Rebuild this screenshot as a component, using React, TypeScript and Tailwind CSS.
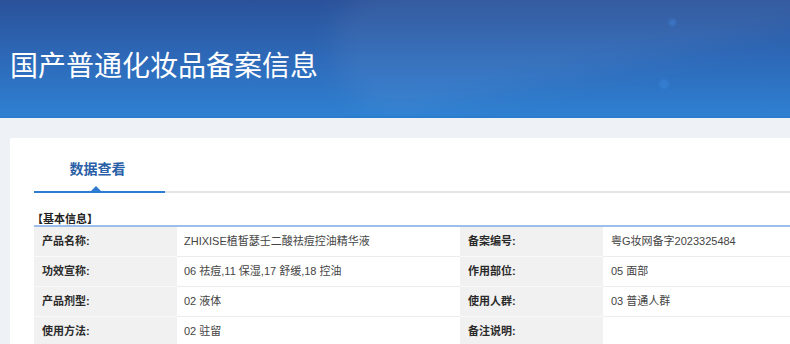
import React from "react";

const font = { fontFamily: '"Liberation Sans", "Noto Sans CJK SC", sans-serif' };

type Row = [string, string, string, string];

const rows: Row[] = [
  ["产品名称:", "ZHIXISE植皙瑟壬二酸祛痘控油精华液", "备案编号:", "粤G妆网备字2023325484"],
  ["功效宣称:", "06 祛痘,11 保湿,17 舒缓,18 控油", "作用部位:", "05 面部"],
  ["产品剂型:", "02 液体", "使用人群:", "03 普通人群"],
  ["使用方法:", "02 驻留", "备注说明:", ""],
];

export default function App() {
  return (
    <div className="w-[790px] h-[344px] overflow-hidden bg-[#eef1f5]" style={font}>
      {/* Header */}
      <div className="relative h-[118px] overflow-hidden border-b-2 border-[#2a7ccc] bg-linear-to-b from-[#2a529a] via-[#2d69b8] to-[#2f80d2]">
        <div className="absolute left-[330px] top-[-60px] h-[130px] w-[520px] rotate-[-12deg] rounded-full bg-white/5 blur-md" />
        <div className="absolute left-[669px] top-[19px] h-[7px] w-[7px] rounded-full bg-[#3f86da]/50 blur-[1px]" />
        <div className="absolute left-[659px] top-[79px] h-[10px] w-[10px] rounded-full bg-[#3f8ce0]/40 blur-[1px]" />
        <div className="relative pl-[10px] pt-[46px]">
          <h1
            className="text-[28px] leading-[36px] text-white font-normal"
            style={{ fontFamily: '"Noto Sans CJK SC", sans-serif' }}
          >
            国产普通化妆品备案信息
          </h1>
        </div>
      </div>

      {/* Body */}
      <div className="pl-[10px] pt-[20px]">
        <div className="bg-white pl-[24px] h-[300px]">
          {/* Tabs */}
          <div className="flex border-b-2 border-[#e6e6e6]">
            <div className="relative -mb-[2px] w-[131px] border-b-2 border-[#2e7ccf] pt-[19px] pb-[10px] text-center">
              <span
                className="text-[14px] leading-[20px] font-bold text-[#2a5ea6] pr-[4px]"
                style={{ fontFamily: '"Noto Sans CJK SC", sans-serif' }}
              >
                数据查看
              </span>
              <div className="absolute left-[57px] bottom-0 h-0 w-0 border-x-[5px] border-b-[5px] border-x-transparent border-b-[#2e7ccf]" />
            </div>
          </div>

          {/* Section title */}
          <div className="mt-[18px] border-b-2 border-[#9dbdea]">
            <div
              className="text-[11px] leading-[14px] font-bold text-[#222] -ml-[2px]"
              style={{ fontFamily: '"Noto Sans CJK SC", sans-serif' }}
            >
              【基本信息】
            </div>
          </div>

          {/* Table */}
          <div className="grid grid-cols-[143px_283px_143px_1fr] text-[11px]">
            {rows.map((r, i) => (
              <React.Fragment key={i}>
                <div className="flex h-[30px] items-center border-b border-[#f9f9f9] bg-[#f1f1f1] pl-[8px] font-bold text-[#2b2b2b]">
                  {r[0]}
                </div>
                <div className="flex h-[30px] items-center border-b border-[#ececec] pl-[7px] text-[#444]">
                  {r[1]}
                </div>
                <div className="flex h-[30px] items-center border-b border-[#f9f9f9] bg-[#f1f1f1] pl-[8px] font-bold text-[#2b2b2b]">
                  {r[2]}
                </div>
                <div className="flex h-[30px] items-center border-b border-[#ececec] pl-[8px] text-[#444]">
                  {r[3]}
                </div>
              </React.Fragment>
            ))}
          </div>
        </div>
      </div>
    </div>
  );
}
